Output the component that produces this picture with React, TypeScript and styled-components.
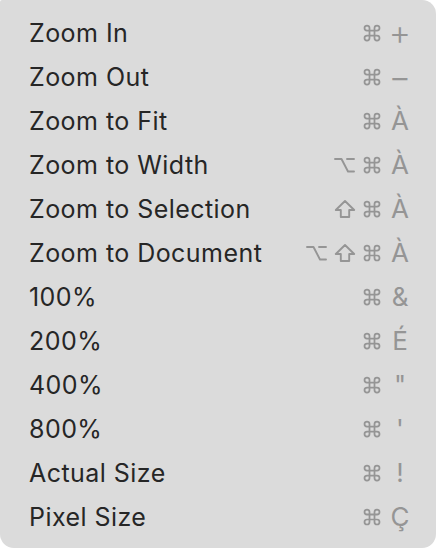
import React from "react";
import styled, { createGlobalStyle } from "styled-components";

const Global = createGlobalStyle`
  html, body { margin: 0; padding: 0; background: #ffffff; }
  body { font-family: Inter, "Noto Sans", sans-serif; }
`;

const Menu = styled.div`
  width: 436px;
  height: 548px;
  box-sizing: border-box;
  background: #dbdbdb;
  border-radius: 2px 14px 14px 14px;
  padding: 11px 25px 9px 29px;
  display: flex;
  flex-direction: column;
`;

const Row = styled.div`
  height: 44px;
  display: flex;
  align-items: center;
  justify-content: space-between;
`;

const Label = styled.span`
  font-size: 25px;
  color: #262626;
  letter-spacing: 0.45px;
`;

const Shortcut = styled.span`
  display: flex;
  align-items: center;
  gap: 6px;
  color: #959595;
`;

const Key = styled.span<{ $wide?: boolean }>`
  font-size: ${(p) => (p.$wide ? "34px" : "26px")};
  font-weight: ${(p) => (p.$wide ? 300 : 400)};
  min-width: 22px;
  margin-left: 1px;
  text-align: center;
  line-height: 30px;
`;

const Glyph = styled.svg`
  display: block;
  fill: none;
  stroke: currentColor;
  stroke-linecap: round;
  stroke-linejoin: round;
`;

const Cmd = () => (
  <Glyph width="20" height="20" viewBox="0 0 24 24" strokeWidth={2.1}>
    <path d="M15 6v12a3 3 0 1 0 3-3H6a3 3 0 1 0 3 3V6a3 3 0 1 0-3 3h12a3 3 0 1 0-3-3" />
  </Glyph>
);

const Opt = () => (
  <Glyph width="23" height="20" viewBox="0 0 23 20" strokeWidth={1.9}>
    <path d="M2 4h6.5l6.5 12.5h6M14 4h7" />
  </Glyph>
);

const Shift = () => (
  <Glyph width="22" height="20" viewBox="0 0 22 20" strokeWidth={1.9}>
    <path d="M11 2L1.8 11H6.8V18H15.2V11H20.2Z" />
  </Glyph>
);

type Mod = "opt" | "shift" | "cmd";

const modIcon: Record<Mod, React.ReactNode> = {
  opt: <Opt />,
  shift: <Shift />,
  cmd: <Cmd />,
};

const items: { label: string; mods: Mod[]; key: string; wide?: boolean }[] = [
  { label: "Zoom In", mods: ["cmd"], key: "+", wide: true },
  { label: "Zoom Out", mods: ["cmd"], key: "−", wide: true },
  { label: "Zoom to Fit", mods: ["cmd"], key: "À" },
  { label: "Zoom to Width", mods: ["opt", "cmd"], key: "À" },
  { label: "Zoom to Selection", mods: ["shift", "cmd"], key: "À" },
  { label: "Zoom to Document", mods: ["opt", "shift", "cmd"], key: "À" },
  { label: "100%", mods: ["cmd"], key: "&" },
  { label: "200%", mods: ["cmd"], key: "É" },
  { label: "400%", mods: ["cmd"], key: "\"" },
  { label: "800%", mods: ["cmd"], key: "'" },
  { label: "Actual Size", mods: ["cmd"], key: "!" },
  { label: "Pixel Size", mods: ["cmd"], key: "Ç" },
];

export default function App() {
  return (
    <>
      <Global />
      <Menu>
        {items.map((it) => (
          <Row key={it.label}>
            <Label>{it.label}</Label>
            <Shortcut>
              {it.mods.map((m) => (
                <React.Fragment key={m}>{modIcon[m]}</React.Fragment>
              ))}
              <Key $wide={it.wide}>{it.key}</Key>
            </Shortcut>
          </Row>
        ))}
      </Menu>
    </>
  );
}
